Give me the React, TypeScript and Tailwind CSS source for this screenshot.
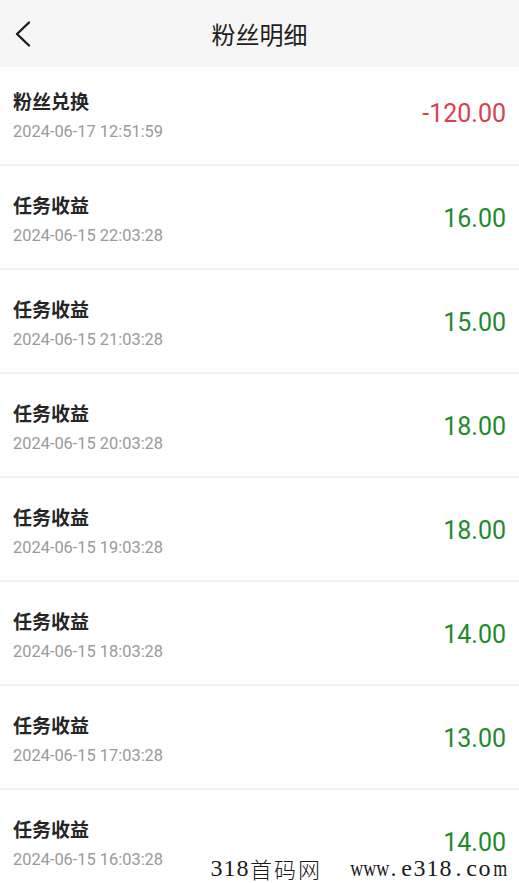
const records = [
  { title: "粉丝兑换", time: "2024-06-17 12:51:59", amount: "-120.00" },
  { title: "任务收益", time: "2024-06-15 22:03:28", amount: "16.00" },
  { title: "任务收益", time: "2024-06-15 21:03:28", amount: "15.00" },
  { title: "任务收益", time: "2024-06-15 20:03:28", amount: "18.00" },
  { title: "任务收益", time: "2024-06-15 19:03:28", amount: "18.00" },
  { title: "任务收益", time: "2024-06-15 18:03:28", amount: "14.00" },
  { title: "任务收益", time: "2024-06-15 17:03:28", amount: "13.00" },
  { title: "任务收益", time: "2024-06-15 16:03:28", amount: "14.00" },
];

// half-width slots for the site watermark, like a fixed-pitch serif
const Mono = ({ text }: { text: string }) => (
  <>
    {text.split("").map((c, i) => (
      <span key={i} className="inline-block w-[13px] text-center">
        <span className={c === "w" || c === "m" ? "inline-block scale-x-75" : "inline-block"}>{c}</span>
      </span>
    ))}
  </>
);

const App = () => (
  <div className="relative w-[519px] h-[883px] overflow-hidden bg-white font-['Roboto','Noto_Sans_CJK_SC',sans-serif]">
    {/* header */}
    <header className="relative flex h-[67px] items-center justify-center bg-[#f6f6f6]">
      <button className="absolute left-[12px] top-[19px] p-0">
        <svg width="22" height="30" viewBox="0 0 22 30" fill="none">
          <path d="M17 3.5 L5 15 L17 26.5" stroke="#1c1c1c" strokeWidth="2.4" strokeLinecap="round" strokeLinejoin="round" />
        </svg>
      </button>
      <h1 className="text-[24px] leading-[30px] text-[#1e1e1e] font-['Noto_Sans_CJK_SC',sans-serif]">粉丝明细</h1>
    </header>

    <ul>
      {records.map((r, i) => {
        const neg = r.amount.startsWith("-");
        return (
          <li
            key={i}
            className={`flex justify-between border-b-2 border-[#f2f2f2] pl-[13px] pr-[13px] ${
              i === 0 ? "h-[99px]" : "h-[104px]"
            }`}
          >
            <div className={i === 0 ? "pt-[22px]" : "pt-[27px]"}>
              <p className="text-[19px] leading-[24px] font-bold text-[#262626] font-['Noto_Sans_CJK_SC',sans-serif]">
                {r.title}
              </p>
              <p className="mt-[9px] text-[16.4px] leading-[20px] text-[#9a9a9a]">{r.time}</p>
            </div>
            <span
              className={`text-[25px] leading-[30px] ${i === 0 ? "mt-[32px]" : "mt-[38px]"} ${
                neg ? "text-[#d9434e]" : "text-[#1f8a2e]"
              }`}
            >
              {r.amount}
            </span>
          </li>
        );
      })}
    </ul>

    {/* watermark */}
    <div className="absolute left-[210px] top-[854px] flex items-center whitespace-nowrap text-[24px] leading-[28px] text-[#1a1a1a] font-['Liberation_Serif',serif]">
      <Mono text="318" />
      <span className="ml-[1px] tracking-[2px] font-['Noto_Sans_CJK_SC',serif] font-light text-[22px]">首码网</span>
      <span className="ml-[26px]">
        <Mono text="www.e318.com" />
      </span>
    </div>
  </div>
);

export default App;
